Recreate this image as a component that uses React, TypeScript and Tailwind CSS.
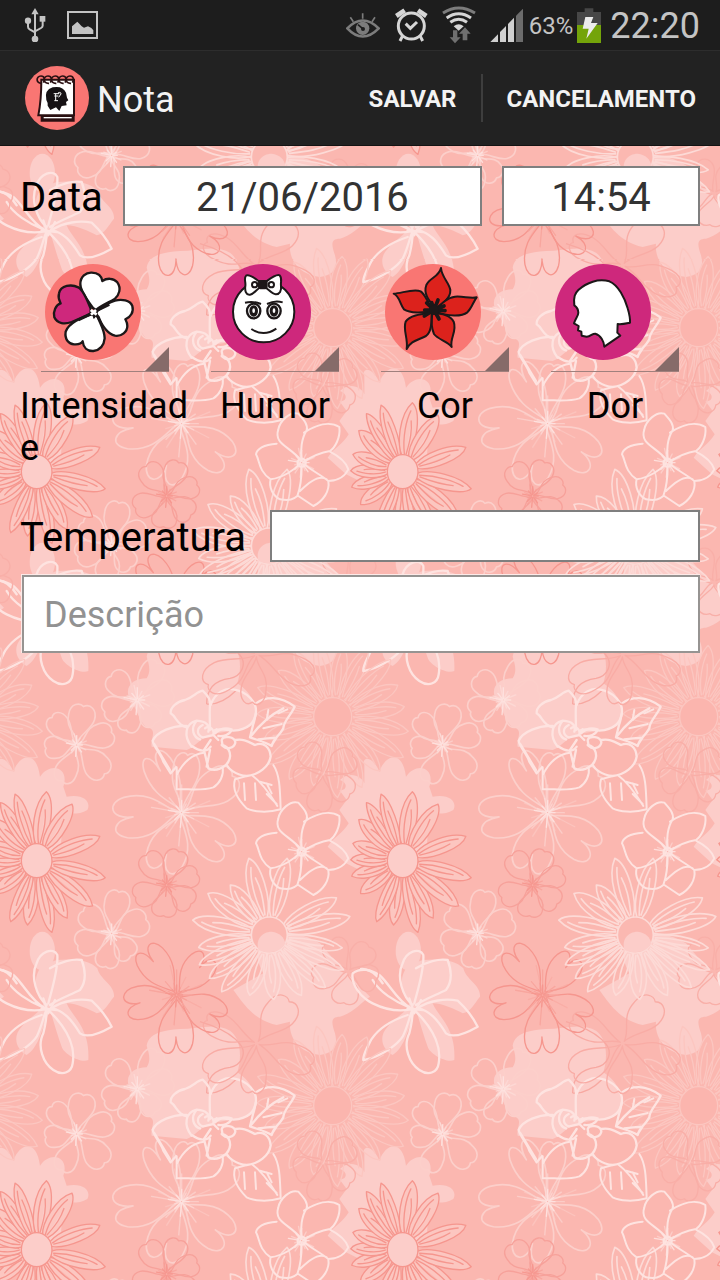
import React, { useState } from 'react';

type Petal = [angle: number, length: number, width: number];

const daisyPetal = (r: number, l: number, w: number) =>
  `M${r},-8 C${r + l * 0.15},${-w * 1.1} ${l * 0.8},${-w * 1.35} ${l},0 C${l * 0.9},${w * 1.15} ${r + l * 0.2},${w * 1.25} ${r},8 M${r + 6},-2 C${l * 0.5},${-w * 0.6} ${l * 0.75},${-w * 0.4} ${l * 0.88},-1 M${r + 8},3 C${l * 0.5},${w * 0.4} ${l * 0.6},${w * 0.4} ${l * 0.74},4`;

const roundPetal = (l: number, w: number) =>
  `M8,0 C${l * 0.3},${-w * 0.2} ${l * 0.35},${-w * 1.2} ${l * 0.72},${-w * 1.1} C${l},${-w * 1.1} ${l * 1.04},${-w * 0.3} ${l * 0.96},0 C${l * 1.06},${w * 0.5} ${l * 0.95},${w * 1.2} ${l * 0.68},${w * 1.1} C${l * 0.45},${w} ${l * 0.3},${w * 0.2} 8,0`;

const heartPetal = (l: number, w: number) =>
  `M12,0 C${l * 0.25},${-w * 0.4} ${l * 0.45},${-w * 1.3} ${l * 0.85},${-w * 1.05} C${l * 1.12},${-w * 0.8} ${l * 1.05},${-w * 0.1} ${l * 0.74},0 C${l * 1.1},${-w * 0.05} ${l * 1.12},${w * 0.85} ${l * 0.85},${w * 1.05} C${l * 0.45},${w * 1.3} ${l * 0.25},${w * 0.4} 12,0`;

function Flower({ x, y, petals, shape, color, fill = 'none', width = 5 }: {
  x: number; y: number; petals: Petal[]; shape: (l: number, w: number) => string; color: string; fill?: string; width?: number;
}) {
  return (
    <g transform={`translate(${x} ${y})`} fill={fill} stroke={color} strokeWidth={width} strokeLinejoin="round" strokeLinecap="round">
      {petals.map(([a, l, w], i) => (
        <path key={i} transform={`rotate(${a})`} d={shape(l, w)} />
      ))}
    </g>
  );
}

function Stamens({ x, y, length, color }: { x: number; y: number; length: number; color: string }) {
  return (
    <g transform={`translate(${x} ${y})`} stroke={color} strokeWidth="4" strokeLinecap="round">
      {Array.from({ length: 16 }, (_, i) => (
        <path key={i} transform={`rotate(${i * 22.5 + (i % 3) * 5})`} d={`M4,0 H${length * (0.5 + ((i * 5) % 7) / 12)}`} opacity={i % 2 ? 0.5 : 0.9} />
      ))}
    </g>
  );
}

const redDaisy: Petal[] = [
  [142, 160, 22], [163, 160, 20], [181, 156, 20], [199, 158, 22], [223, 180, 24], [238, 205, 20], [252, 210, 20], [278, 209, 26], [302, 200, 26],
  [98, 195, 22], [113, 199, 20], [78, 220, 22], [62, 195, 22], [39, 216, 26], [14, 212, 24], [-21, 203, 24],
];
const whiteDaisy: Petal[] = [
  [-13, 248, 26], [-29, 230, 26], [255, 238, 28], [283, 236, 26], [214, 222, 28], [191, 234, 26], [170, 215, 24], [157, 228, 22], [144, 222, 24],
  [130, 222, 22], [108, 190, 24], [86, 194, 26], [62, 205, 24], [43, 230, 22], [25, 245, 22], [10, 222, 20], [232, 190, 24],
];
const faintDaisy: Petal[] = Array.from({ length: 19 }, (_, i): Petal => [i * 19 - 8, 215 + (i % 3) * 14, 25]);

function PatchLayer() {
  return (
    <g id="patch-layer" fill="#fccdc9">
      <path d="M440,20 C445,-10 470,-25 540,-30 C590,-30 650,-50 690,-25 C725,0 725,60 712,100 C760,130 775,180 765,220 C740,240 700,240 650,250 C600,260 590,290 560,300 L455,290 C450,270 470,245 450,235 C420,230 415,180 390,150 C370,110 400,85 440,85 C455,60 445,40 440,20Z" />
      <path d="M700,1020 C730,1060 760,1110 830,1125 L870,1115 C865,1170 905,1210 960,1215 C1000,1210 1015,1190 1005,1150 C995,1120 990,1100 1020,1100 C1060,1090 1080,1060 1110,1040 C1070,1000 1000,930 960,880 C930,860 870,840 810,845 C770,860 760,920 790,970Z" />
      <path d="M-60,640 L-115,590 C-95,560 -70,550 -52,520 L-80,480 L-58,450 L-80,420 C-60,425 -50,400 -78,390 C-50,360 -10,380 -5,400 L-5,345 C-15,320 20,315 40,365 C60,310 110,300 120,380 C150,335 210,350 190,410 L200,440 C250,430 275,455 262,480 C240,495 210,490 190,490 L180,620 L20,680Z" />
      <ellipse cx="127" cy="903" rx="38" ry="58" />
      <path d="M170,930 C220,925 270,930 292,955 C300,990 345,1005 342,1040 C325,1060 315,1085 290,1090 C270,1080 230,1060 200,1060 C215,1100 270,1130 265,1230 C240,1240 190,1210 185,1190 C170,1150 160,1110 150,1080 C130,1120 120,1190 80,1215 C50,1200 35,1160 65,1130 C90,1100 120,1090 130,1060 C100,1020 100,970 130,945Z" />
    </g>
  );
}

function LineLayer() {
  const soft = '#fccfca';
  const white = '#fee3e0';
  const red = '#f6968e';
  const faintRed = '#f8a8a1';
  return (
    <g id="line-layer">
      <Flower x={1000} y={200} petals={faintDaisy} shape={(l, w) => daisyPetal(60, l, w)} color="#fcc6c0" width={4} />
      <circle cx="998" cy="200" r="57" fill="#fbb5ae" stroke="#fcc6c0" strokeWidth="4" />
      <Flower x={970} y={370} petals={[[-30, 105, 36], [38, 105, 36], [98, 115, 34], [160, 90, 36], [235, 100, 34]]} shape={roundPetal} color="#f9aea7" width={4} />
      <Flower x={770} y={1180} petals={[[-52, 165, 44], [22, 180, 38], [95, 150, 34], [148, 178, 42], [205, 170, 34]]} shape={roundPetal} color="#f9aca5" width={4} />
      <Flower x={1045} y={965} petals={[[-50, 100, 34], [18, 90, 36], [98, 98, 36], [170, 110, 34], [240, 108, 36]]} shape={roundPetal} color="#f9afa8" width={4} />
      <Flower x={230} y={285} petals={[[-80, 122, 36], [-20, 115, 34], [46, 125, 36], [112, 120, 30], [174, 96, 30], [228, 115, 30]]} shape={roundPetal} color={soft} />
      <Flower x={412} y={150} petals={[[-62, 130, 32], [-15, 110, 36], [52, 90, 30], [110, 100, 30], [160, 108, 34], [222, 110, 34]]} shape={roundPetal} color={soft} />
      <Flower x={335} y={850} petals={[[-80, 130, 34], [-22, 115, 38], [50, 92, 32], [100, 105, 32], [160, 112, 36], [218, 112, 34]]} shape={roundPetal} color={soft} />
      <Flower x={545} y={488} petals={[[40, 178, 54], [110, 180, 54], [175, 198, 58], [243, 190, 42]]} shape={heartPetal} color={soft} />
      <Flower x={545} y={488} petals={[[-36, 195, 48], [-84, 180, 36]]} shape={roundPetal} color={soft} />
      <Stamens x={545} y={488} length={100} color={soft} />
      <Flower x={500} y={705} petals={[[-70, 110, 32], [-20, 100, 30], [38, 96, 34], [96, 96, 34], [158, 104, 34], [235, 112, 34]]} shape={roundPetal} color="#f7a19a" width={4} />
      <Stamens x={500} y={705} length={34} color={red} />
      <Flower x={530} y={1035} petals={[[-50, 145, 42], [30, 155, 48], [91, 170, 48], [168, 152, 46], [235, 165, 44]]} shape={heartPetal} color={red} width={4} />
      <Stamens x={530} y={1035} length={90} color="#f8a49c" />
      <Flower x={110} y={632} petals={redDaisy} shape={(l, w) => daisyPetal(46, l, w)} color={red} fill="#fcc6c0" width={4} />
      <ellipse cx="110" cy="632" rx="46" ry="51" fill="#fccdc9" stroke={red} strokeWidth="4" />
      <Flower x={808} y={855} petals={whiteDaisy} shape={(l, w) => daisyPetal(54, l, w)} color="#fddad6" />
      <circle cx="808" cy="855" r="54" fill="#fbb8b1" stroke="#fddad6" strokeWidth="5" />
      <path d="M776,900 C765,870 785,845 815,845 C840,848 852,862 856,880 C845,905 805,915 776,900Z" fill="#fccdc9" />
      <path d="M620,162 C620,110 650,90 690,85 C725,78 745,40 715,10 C690,-20 640,-40 600,-52 M620,162 C650,165 680,150 710,120" fill="none" stroke={faintRed} strokeWidth="4" />

      <g fill="none" stroke={white} strokeWidth="7" strokeLinejoin="round" strokeLinecap="round">
        <path d="M905,600 C870,555 820,550 835,505 C840,480 870,450 895,458 C910,475 925,490 920,508 C905,530 900,570 905,600 M912,515 C950,490 990,480 1018,498 C1022,530 1005,560 990,570 C960,575 930,590 912,602 M990,572 C1025,590 1040,610 1045,625 C1030,655 1000,660 985,660 C960,640 930,625 912,610 M830,548 C790,550 770,565 768,580 C780,600 775,630 812,655 C850,650 885,625 900,608 M812,655 C805,680 820,705 840,715 C870,720 880,715 892,705 C905,670 905,640 905,615 M985,660 C990,690 970,720 940,735 L895,705 M900,690 C930,660 960,640 980,655" strokeWidth="6" />
        <circle cx="905" cy="605" r="12" />
        <path d="M512,190 C510,172 530,155 555,150 C580,142 590,125 608,122 C622,135 633,150 630,165 C628,190 630,215 630,240 M512,190 C530,200 530,225 560,232 M632,165 C645,125 680,112 700,118 C745,125 770,160 768,185 C765,225 735,240 700,242 C680,240 660,235 645,240 M560,228 C520,225 470,245 458,272 C460,290 485,315 490,335 L512,370 L528,352 M463,282 L510,360 M575,290 C550,260 555,220 590,212 C620,215 630,225 625,245 M590,212 C570,235 580,262 600,268 M608,225 C588,235 590,255 608,262 M575,288 C600,305 620,308 632,290 M632,270 L612,300 L625,355 C645,365 665,355 678,345 C700,320 690,290 665,285 M620,350 L630,300" />
        <path d="M615,235 C625,225 640,235 642,250 M645,250 C665,230 685,235 695,238 C690,255 670,260 655,258 M665,270 C670,255 705,260 706,278 C702,295 680,300 668,288Z M610,262 L640,255 L655,270 M640,250 L650,238 M706,270 C730,265 745,275 765,285 C790,275 810,290 812,320 C808,350 775,375 740,378 C705,375 685,355 680,345 M768,160 C795,140 840,135 884,170 C870,200 850,215 850,235 C835,262 820,265 815,288 C795,275 770,270 750,262 C770,235 800,200 850,175 M750,262 L768,190 M815,285 L830,262 L775,268" />
        <path d="M790,235 L845,222 M805,180 L800,210 M835,190 L862,178 M820,345 C840,375 840,420 842,478 C800,490 760,485 740,475 C715,450 695,420 705,388 L740,378 M755,375 C790,400 815,440 832,468 M765,400 L768,450 M800,432 L830,462 M800,400 L815,430 M780,395 L815,405 M732,400 L735,450" strokeWidth="6" />
        <path d="M530,352 L530,418 C560,415 600,425 640,412 C660,400 672,375 668,352 M530,375 C550,335 580,312 612,308" strokeWidth="6" />
        <path d="M140,1065 C110,1040 90,980 110,940 C120,905 160,890 172,915 C175,960 155,1020 145,1060 M150,955 C180,935 220,925 245,930 C260,970 255,1000 240,1020 C210,1035 170,1050 150,1065 M155,1075 C190,1050 240,1045 275,1052 C300,1075 320,1100 335,1130 C300,1150 260,1165 240,1150 C215,1110 190,1080 155,1075 M135,1075 C90,1050 70,1000 40,975 C10,955 -20,955 -40,970 C-45,1000 -20,1040 20,1060 C60,1080 100,1085 135,1078 M20,990 C40,1025 85,1055 130,1072 M125,1095 C80,1110 40,1130 15,1170 C0,1200 -10,1215 -8,1230 C30,1225 85,1195 110,1160 C125,1130 130,1100 140,1078 M140,1080 C140,1110 135,1130 130,1150 C110,1190 130,1240 160,1260 C190,1280 215,1265 218,1240 C225,1200 215,1150 150,1085" />
        <path d="M-15,957 C10,955 35,975 50,1000 M130,1045 L145,1090 L165,1050 M125,1075 L170,1080" />
      </g>
      <Stamens x={230} y={285} length={34} color={white} />
      <Stamens x={412} y={150} length={44} color={white} />
      <Stamens x={335} y={850} length={34} color={white} />
      <Stamens x={905} y={605} length={44} color={white} />
      <Stamens x={545} y={488} length={44} color={white} />
      <Stamens x={530} y={1035} length={36} color={red} />
    </g>
  );
}

const TILE_OFFSETS = [0, -1098, 1098].flatMap((dx) => [0, -1167, 1167].map((dy) => [dx, dy])).slice(1);

function Repeats({ of }: { of: string }) {
  return (
    <>
      {TILE_OFFSETS.map(([dx, dy]) => (
        <use key={`${dx},${dy}`} href={of} x={dx} y={dy} />
      ))}
    </>
  );
}

function FloralBackground() {
  return (
    <svg aria-hidden="true" className="absolute inset-0 h-full w-full">
      <defs>
        <pattern id="floral" width="1098" height="1167" patternUnits="userSpaceOnUse" patternTransform="translate(0 115) scale(0.33333)">
          <rect width="1098" height="1167" fill="#fbb7b0" />
          <PatchLayer />
          <Repeats of="#patch-layer" />
          <LineLayer />
          <Repeats of="#line-layer" />
        </pattern>
      </defs>
      <rect width="100%" height="100%" fill="url(#floral)" />
    </svg>
  );
}

function StatusBar() {
  return (
    <div className="flex h-[51px] items-center border-b border-[#2d2d2d] bg-[#1d1d1d] pr-5 pl-6 text-[#c4c4c4]">
      <svg viewBox="72 24 66 102" className="h-[34px] w-[22px] shrink-0" fill="#c4c4c4">
        <path d="M105,24 L116,43 H94Z" />
        <circle cx="105" cy="117" r="10" />
        <circle cx="84" cy="62" r="9.500" />
        <rect x="119" y="48" width="17" height="17" />
        <path d="M105,40 V112 M84,64 V80 Q84,85 89,88 L105,97 M128,62 V77 Q128,81 123,84 L105,94" fill="none" stroke="#c4c4c4" strokeWidth="6" />
      </svg>
      <svg viewBox="201 30 93 90" className="ml-[21px] h-[30px] w-[31px] shrink-0" fill="#c4c4c4">
        <rect x="204" y="36" width="87" height="78" fill="none" stroke="#c4c4c4" strokeWidth="6" />
        <path d="M216,102 V79 L225,71 L232,65 L238,71 L245,79 L252,83 L264,79 L274,84 L280,91 V102Z" />
      </svg>
      <svg viewBox="48 36 102 78" className="ml-auto h-[26px] w-[34px] shrink-0" fill="none" stroke="#7c7c7c" strokeWidth="5">
        <path d="M52,85 Q98,38 146,85 Q98,134 52,85Z" strokeWidth="8" />
        <circle cx="98" cy="85" r="20" fill="#7c7c7c" stroke="none" />
        <path d="M84,74 L98,86" stroke="#1d1d1d" />
        <circle cx="99" cy="87" r="6" fill="#1d1d1d" stroke="none" />
        <path d="M98,40 V56 M61,52 L70,65 M135,52 L126,65" />
      </svg>
      <svg viewBox="195 24 99 102" className="ml-[15px] h-[34px] w-[33px] shrink-0" fill="none" stroke="#d6d6d6">
        <circle cx="244" cy="78" r="39" strokeWidth="9" />
        <path d="M227,71 L241,85 L261,66" strokeWidth="9" />
        <path d="M199,48 L224,31 M289,48 L264,31" strokeWidth="14" />
        <path d="M218,107 L210,123 M270,107 L278,123" strokeWidth="9" />
      </svg>
      <svg viewBox="336 18 102 114" className="ml-[14px] h-[38px] w-[34px] shrink-0" fill="none" strokeWidth="9">
        <path d="M339,39 Q386,9 435,39" stroke="#7c7c7c" />
        <path d="M350,54 Q386,29 423,54" stroke="#d6d6d6" />
        <path d="M361,67 Q386,49 411,67" stroke="#d6d6d6" />
        <path d="M371,79 Q386,67 401,79 L386,92Z" fill="#d6d6d6" />
        <path d="M369,91 H382 V112 H392 L375,130 L359,112 H369Z M398,121 V101 H387 L405,82 L422,101 H412 V121Z" fill="#707070" />
      </svg>
      <svg viewBox="480 30 99 99" className="ml-[14px] h-[33px] w-[33px] shrink-0" fill="#d0d0d0">
        <path d="M481,129 L504,106 V129Z M510,129 V99 L528,81 V129Z M534,129 V75 L552,56 V129Z" />
        <path d="M558,129 V50 L579,29 V129Z" fill="#6c6c6c" />
      </svg>
      <span className="ml-[6px] pt-px text-2xl leading-[50px]">63%</span>
      <svg viewBox="741 24 72 105" className="ml-[4px] h-[35px] w-[24px] shrink-0">
        <path d="M741,36 H764 V25 H790 V36 H813 V75 H741Z" fill="#474747" />
        <rect x="741" y="75" width="72" height="54" fill="#74a40a" />
        <path d="M766,51 H790 L783,69 H803 L769,116 L776,86 H758Z" fill="#ececec" />
      </svg>
      <span className="ml-[9px] pt-px text-4xl leading-[50px]">22:20</span>
    </div>
  );
}

function NoteIcon() {
  return (
    <svg viewBox="75 198 192 192" className="h-16 w-16 shrink-0">
      <circle cx="171" cy="294" r="96" fill="#f97673" />
      <path d="M122,344 H224 V365 H122Z" fill="#2a1012" />
      <path d="M131,351 H215 V355 H131Z" fill="#fff" />
      <path d="M124,239 H222 V346 H115 Q124,300 124,239Z" fill="#fff" stroke="#2a1012" strokeWidth="6" />
      <g fill="none" stroke="#2a1012" strokeWidth="5">
        {[121, 142, 164, 186, 208].map((x) => (
          <path key={x} d={`M${x + 5},250 C${x - 14},252 ${x - 14},228 ${x + 2},228 C${x + 14},228 ${x + 14},240 ${x + 9},248`} />
        ))}
      </g>
      <path d="M151,330 L143,317 Q145,310 139,300 Q132,270 158,262 Q188,256 198,278 L201,293 L205,301 L198,306 L200,316 L185,318 L178,333 L168,322Z" fill="#161214" />
      <path d="M161,281 H178 M163,288 H175 M167,281 V302 M174,279 Q183,274 183,282 L176,292 M163,302 H174" stroke="#fff" strokeWidth="3" fill="none" />
    </svg>
  );
}

const ink = '#1c1718';

function IntensityIcon() {
  return (
    <svg viewBox="135 342 288 288" className="h-24 w-24">
      <circle cx="279" cy="486" r="144" fill="#f97673" />
      <g fill="#fff" stroke={ink} strokeWidth="7" strokeLinejoin="round">
        <path d="M279,474 C262,450 240,425 241,402 C241,380 258,367 275,368 C295,369 305,378 307,393 C320,384 340,383 352,397 C365,415 357,435 345,446 C325,458 302,467 288,480Z" />
        <path d="M272,476 C262,450 247,418 235,412 C215,402 182,405 177,430 C173,447 180,455 182,460 C168,464 158,485 163,502 C172,522 195,523 215,516 C235,508 255,500 272,490Z" fill="#ce287c" />
        <path d="M271,494 C245,502 205,520 197,545 C193,570 208,582 222,583 C235,584 245,580 248,574 C250,592 262,604 280,603 C300,600 312,585 314,565 C314,540 300,520 292,498Z" />
        <path d="M290,496 C305,520 318,550 345,557 C365,560 382,545 382,528 C382,517 378,512 376,508 C392,502 402,485 397,468 C390,450 365,447 345,452 C325,458 305,472 290,484Z" />
      </g>
      <path d="M283,505 C279,494 289,488 296,500 L306,524" fill="none" stroke={ink} strokeWidth="6" />
      <path d="M288,483 L328,464 M273,492 L235,510" stroke={ink} strokeWidth="8" />
      <path d="M272,480 L290,494 M288,480 L273,494" stroke="#fff" strokeWidth="8" />
    </svg>
  );
}

function MoodIcon() {
  return (
    <svg viewBox="645 342 288 288" className="h-24 w-24" fill="none" stroke={ink} strokeWidth="6">
      <circle cx="789" cy="486" r="144" fill="#ce287c" stroke="none" />
      <circle cx="791" cy="485" r="92" fill="#fff" />
      <path d="M782,398 C768,388 752,372 739,376 C730,385 738,395 736,408 C734,422 738,436 750,434 C762,432 770,418 782,411Z" fill="#fff" />
      <path d="M794,398 C808,388 828,371 839,376 C848,386 841,395 843,408 C845,422 839,434 827,433 C815,431 806,418 794,411Z" fill="#fff" />
      <rect x="777" y="394" width="23" height="21" rx="4" fill={ink} />
      <ellipse cx="764" cy="404" rx="8" ry="8" />
      <ellipse cx="814" cy="404" rx="8" ry="8" />
      {[761, 822].map((x) => (
        <g key={x}>
          <ellipse cx={x} cy="483" rx="20" ry="22" fill="#fff" strokeWidth="7" />
          <ellipse cx={x} cy="483" rx="10" ry="14" fill={ink} />
          <ellipse cx={x} cy="482" rx="4" ry="7" stroke="none" fill="#fff" />
        </g>
      ))}
      <path d="M735,458 Q760,452 783,462 M801,462 Q825,450 848,457" />
      <path d="M754,537 Q791,562 829,536" />
    </svg>
  );
}

function ColorIcon() {
  return (
    <svg viewBox="75 342 288 288" className="h-24 w-24">
      <circle cx="219" cy="486" r="144" fill="#f97673" />
      <g fill="#dc221c" stroke={ink} strokeWidth="6" strokeLinejoin="round">
        <path d="M222,470 C205,450 190,430 199,405 C210,382 236,382 243,354 C245,382 268,398 271,420 C272,445 250,460 222,478Z" />
        <path d="M225,482 C245,460 262,442 285,440 C310,438 330,446 350,442 C340,455 335,475 322,487 C305,500 265,500 225,484Z" />
        <path d="M217,490 C245,490 270,495 281,515 C292,545 268,565 275,591 C262,572 235,570 222,552 C212,530 214,510 217,490Z" />
        <path d="M215,488 C214,520 215,545 198,558 C175,570 152,572 140,597 C145,565 128,540 137,515 C150,495 185,492 215,488Z" />
        <path d="M217,482 C190,490 150,490 132,478 C118,460 120,440 101,431 C125,430 160,415 182,424 C198,435 200,455 217,474Z" />
      </g>
      <path d="M222,480 L200,459 M222,480 L215,458 M222,480 L234,450 M222,480 L252,468 M222,480 L255,482 M222,480 L237,507 M222,480 L193,498 M222,480 L194,480" stroke={ink} strokeWidth="11" strokeLinecap="round" />
      <circle cx="222" cy="480" r="15" fill={ink} />
    </svg>
  );
}

function PainIcon() {
  return (
    <svg viewBox="585 342 288 288" className="h-24 w-24">
      <circle cx="729" cy="486" r="144" fill="#ce287c" />
      <path
        d="M643,466 C640,440 645,430 655,420 C680,397 715,385 748,394 C775,405 795,445 803,475 C808,492 811,505 810,518 C800,520 785,524 773,522 L772,548 L781,557 L733,590 C732,575 722,555 706,551 C697,550 692,560 680,560 L665,557 L664,545 L654,541 L656,528 L642,520 C646,505 655,498 655,488 C655,478 650,471 643,466Z"
        fill="#fff" stroke={ink} strokeWidth="6" strokeLinejoin="round"
      />
    </svg>
  );
}

function IconPicker({ id, label, children }: { id: string; label: string; children: React.ReactNode }) {
  return (
    <div className="flex flex-col items-center">
      <div className="relative flex h-27 w-32 border-b border-[#a0807d] pl-1">
        {children}
        <svg viewBox="0 0 24 24" className="absolute right-0 bottom-0 h-6 w-6" aria-hidden="true">
          <path d="M24,0 V24 H0Z" fill="#866b69" />
        </svg>
        <select id={id} defaultValue="1" className="absolute inset-0 h-full w-full appearance-none opacity-0">
          <option value="1"></option>
        </select>
      </div>
      <label htmlFor={id} className="mt-[13px] text-4xl leading-[42px] break-all">{label}</label>
    </div>
  );
}

export default function App() {
  const [date, setDate] = useState('21/06/2016');
  const [time, setTime] = useState('14:54');
  const [temperature, setTemperature] = useState('');
  const [description, setDescription] = useState('');
  const box = 'min-w-0 rounded-none border-2 border-[#7f7f7f] bg-white pt-[2px] text-[40px] leading-[46px] text-[#333] outline-none';
  return (
    <div className="flex min-h-screen flex-col bg-[#fbb7b0] font-['Roboto',sans-serif] text-black">
      <StatusBar />
      <header className="flex h-[95px] items-center border-b border-[#141414] bg-[#222] pl-[25px] text-[#f3f3f3]">
        <NoteIcon />
        <h1 className="ml-2 pt-1 text-4xl">Nota</h1>
        <div className="ml-auto flex h-12 items-center divide-x-2 divide-[#3e3e3e] text-2xl font-bold">
          <button type="button" className="h-full px-6 pt-[2px]">SALVAR</button>
          <button type="button" className="h-full px-6 pt-[2px]">CANCELAMENTO</button>
        </div>
      </header>
      <main className="relative flex-1">
        <FloralBackground />
        <form className="relative px-5 pt-5" onSubmit={(e) => e.preventDefault()}>
          <div className="flex h-15 items-center gap-5">
            <label htmlFor="date" className="pt-1 text-[40px] leading-[46px]">Data</label>
            <input id="date" type="text" value={date} onChange={(e) => setDate(e.target.value)} className={`${box} h-full flex-1 text-center`} />
            <input id="time" type="text" aria-label="Hora" value={time} onChange={(e) => setTime(e.target.value)} className={`${box} h-full w-[198px] text-center`} />
          </div>
          <div className="mt-[38px] grid grid-cols-4">
            <IconPicker id="intensity" label="Intensidade"><IntensityIcon /></IconPicker>
            <IconPicker id="mood" label="Humor"><MoodIcon /></IconPicker>
            <IconPicker id="color" label="Cor"><ColorIcon /></IconPicker>
            <IconPicker id="pain" label="Dor"><PainIcon /></IconPicker>
          </div>
          <div className="mt-[41px] flex items-center gap-6">
            <label htmlFor="temperature" className="pt-1 text-[40px] leading-[46px]">Temperatura</label>
            <input id="temperature" type="text" value={temperature} onChange={(e) => setTemperature(e.target.value)} className={`${box} h-13 flex-1`} />
          </div>
          <div className="mt-3 ml-px border-t border-l border-[#fdeae8]">
            <input
              type="text"
              aria-label="Descrição"
              placeholder="Descrição"
              value={description}
              onChange={(e) => setDescription(e.target.value)}
              className="block h-[78px] w-full rounded-none border-2 border-[#969492] bg-white px-5 pt-[2px] text-4xl text-[#333] outline-none placeholder:text-[#929292]"
            />
          </div>
        </form>
      </main>
    </div>
  );
}
